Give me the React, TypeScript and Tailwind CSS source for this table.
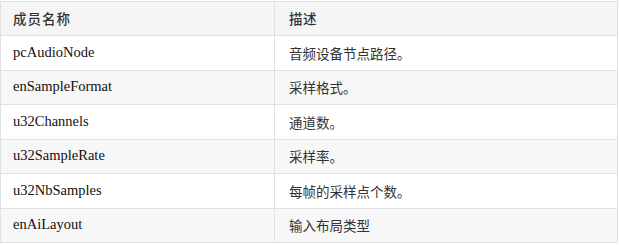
import React from "react";

const rows: [string, string][] = [
  ["pcAudioNode", "音频设备节点路径。"],
  ["enSampleFormat", "采样格式。"],
  ["u32Channels", "通道数。"],
  ["u32SampleRate", "采样率。"],
  ["u32NbSamples", "每帧的采样点个数。"],
  ["enAiLayout", "输入布局类型"],
];

export default function App() {
  return (
    <div className="w-[619px] h-[245px] bg-white pt-[1px]">
      <div className="w-[618px] border-t border-l border-[#dfe2e5] text-[#262626]">
        <div className="flex h-[34px] bg-[#f5f5f5] border-b border-[#dfe2e5] font-['Noto_Sans_CJK_SC',sans-serif] font-medium text-[13.5px] text-[#333333]">
          <div className="w-[274px] border-r border-[#dfe2e5] pl-[12px] flex items-center tracking-[1px]">
            成员名称
          </div>
          <div className="flex-1 border-r border-[#dfe2e5] pl-[14px] flex items-center tracking-[0.5px]">
            描述
          </div>
        </div>
        {rows.map(([a, b], i) => (
          <div
            key={a}
            className={`flex h-[34.5px] border-b border-[#dfe2e5] ${i % 2 === 1 ? "bg-[#f7f7f7]" : "bg-white"}`}
          >
            <div className="w-[274px] border-r border-[#dfe2e5] pl-[12px] flex items-center text-[14.5px] text-[#111111] font-['Liberation_Serif',serif]">
              {a}
            </div>
            <div className="flex-1 border-r border-[#dfe2e5] pl-[14px] flex items-center text-[13.5px] font-['Noto_Sans_CJK_SC',sans-serif] text-[#333333]">
              {b}
            </div>
          </div>
        ))}
      </div>
    </div>
  );
}
